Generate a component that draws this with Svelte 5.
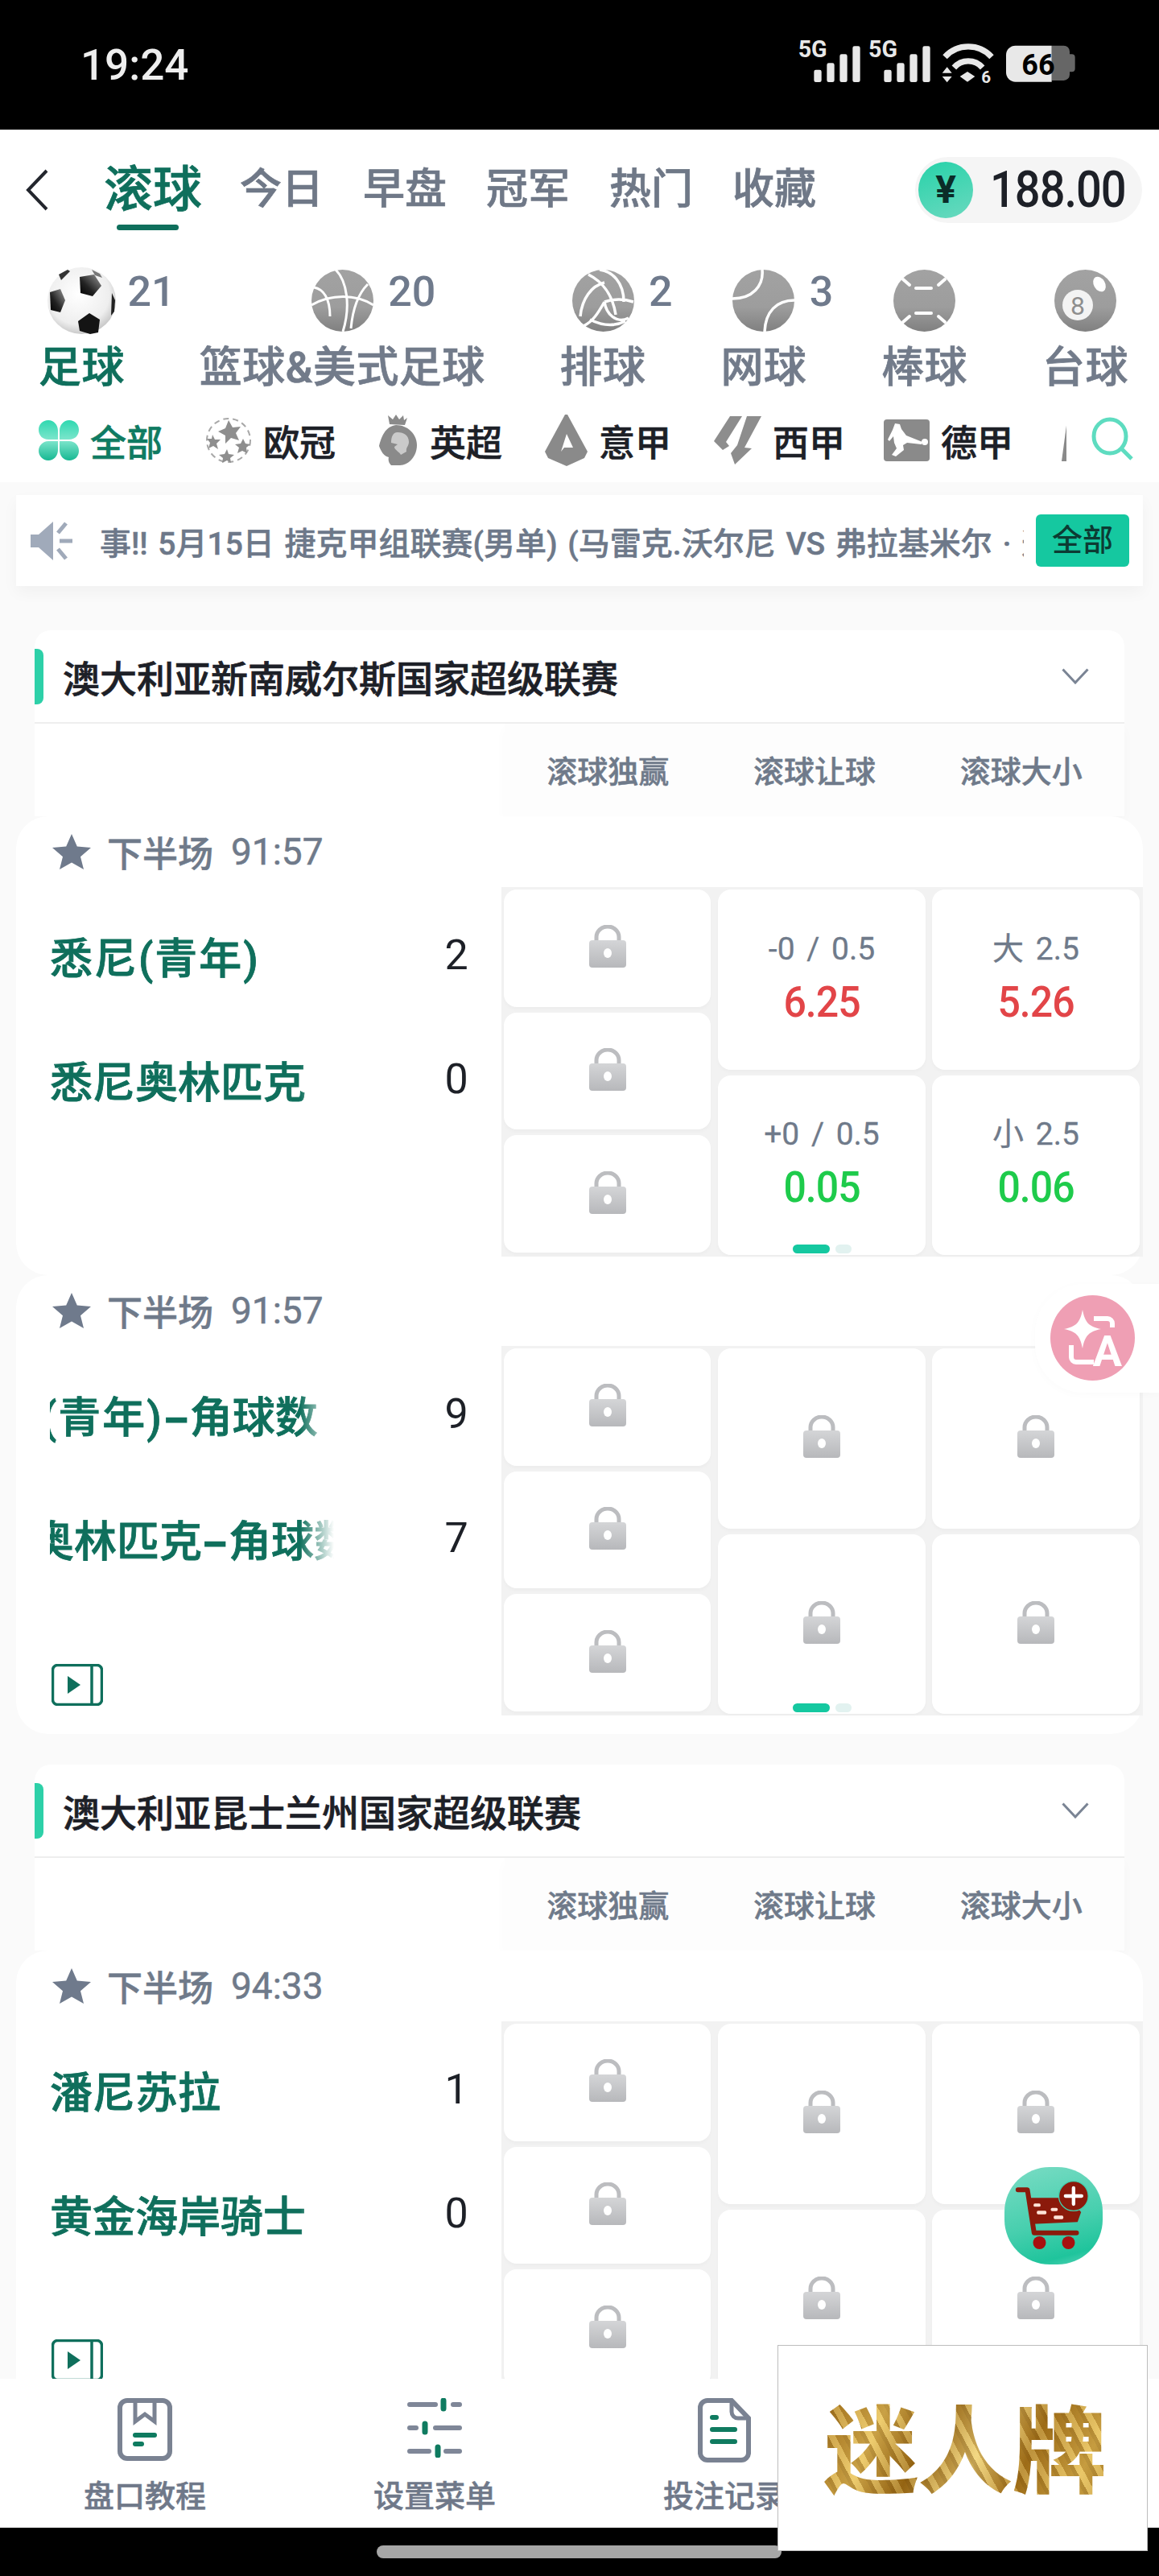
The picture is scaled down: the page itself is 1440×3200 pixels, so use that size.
<script>
  const tabs = ['今日', '早盘', '冠军', '热门', '收藏'];
  const leagueOne = [
    { time: '91:57', teams: [{ n: '悉尼(青年)', s: 2, wide: true }, { n: '悉尼奥林匹克', s: 0 }], video: false,
      cols: [[{ l: '-0 / 0.5', v: '6.25', c: 'up' }, { l: '+0 / 0.5', v: '0.05', c: 'down', dots: true }], [{ l: '大 2.5', v: '5.26', c: 'up' }, { l: '小 2.5', v: '0.06', c: 'down' }]] },
    { time: '91:57', teams: [{ n: '悉尼(青年)', s: 9, off: 'a', corner: true, wide: true }, { n: '悉尼奥林匹克', s: 7, off: 'b', corner: true }], video: true,
      cols: [[{}, { dots: true }], [{}, {}]] }
  ];
  const leagueTwo = [
    { time: '94:33', teams: [{ n: '潘尼苏拉', s: 1 }, { n: '黄金海岸骑士', s: 0 }], video: true,
      cols: [[{}, {}], [{}, {}]] }
  ];
</script>

{#snippet lock()}
  <svg class="lock" viewBox="0 0 46 53">
    <defs><linearGradient id="lk" x1="0" y1="0" x2="0" y2="1"><stop offset="0" stop-color="#d4d5d7"/><stop offset="1" stop-color="#b7b8bb"/></linearGradient></defs>
    <path d="M9 22V15a14 13 0 0 1 28 0v7" fill="none" stroke="#bcbdc0" stroke-width="5"/>
    <rect x="0" y="19" width="46" height="34" rx="4" fill="url(#lk)"/>
    <ellipse cx="23" cy="35" rx="5" ry="6" fill="#fff"/>
  </svg>
{/snippet}

{#snippet match(m)}
  <section class="match">
    <div class="match-head">
      <svg class="star" viewBox="0 0 48 44"><path d="M24 0l6.8 15.6 17.2 1.4-13 11.2L39 44 24 35.6 9 44l4-15.8L0 17l17.2-1.4z" fill="#6f7a8c"/></svg>
      <span>下半场</span><span class="clock">{m.time}</span>
    </div>
    <div class="match-body">
      <div class="teams">
        {#each m.teams as t}
          <div class="team">
            <div class="name"><span class:off-a={t.off === 'a'} class:off-b={t.off === 'b'} class:wide={t.wide}>{t.n}</span>{#if t.corner}<span class="hy">-</span><span>角球数</span>{/if}</div>
            <div class="score">{t.s}</div>
          </div>
        {/each}
        {#if m.video}
          <svg class="video" viewBox="0 0 64 52">
            <rect x="1.5" y="1.5" width="61" height="49" rx="6" fill="#fff" stroke="#0f6f5c" stroke-width="3.5"/>
            <path d="M50 2v48" stroke="#0f6f5c" stroke-width="3.5"/>
            <path d="M20 15l16 11-16 11z" fill="#0f6f5c"/>
          </svg>
        {/if}
      </div>
      <div class="grid">
        <div class="col one">
          <div class="cell">{@render lock()}</div>
          <div class="cell">{@render lock()}</div>
          <div class="cell">{@render lock()}</div>
        </div>
        {#each m.cols as col}
          <div class="col two">
            {#each col as c}
              <div class="cell">
                {#if c.v}
                  <div class="line">{c.l}</div>
                  <div class="val {c.c}">{c.v}</div>
                {:else}
                  {@render lock()}
                {/if}
                {#if c.dots}
                  <div class="dots"><i></i><b></b></div>
                {/if}
              </div>
            {/each}
          </div>
        {/each}
      </div>
    </div>
  </section>
{/snippet}

{#snippet leagueHead(title)}
  <div class="league">
    <div class="league-title">
      <i class="accent"></i>
      <h2>{title}</h2>
      <svg class="chev" viewBox="0 0 34 20"><path d="M1.5 1.5L17 18 32.5 1.5" fill="none" stroke="#7a8494" stroke-width="3"/></svg>
    </div>
    <div class="cols-head">
      <div class="cols-right"><span>滚球独赢</span><span>滚球让球</span><span>滚球大小</span></div>
    </div>
  </div>
{/snippet}

<div class="page">
  <header class="status">
    <div class="time">19:24</div>
    <svg class="sys" viewBox="0 0 1200 270">
      <g fill="#e8e8e8">
        <text x="95" y="122" class="sg">5G</text>
        <rect x="154" y="170" width="28" height="46" rx="7"/><rect x="202" y="145" width="28" height="71" rx="7"/><rect x="250" y="112" width="28" height="104" rx="7"/><rect x="298" y="82" width="28" height="134" rx="7"/>
        <text x="357" y="122" class="sg">5G</text>
        <rect x="415" y="170" width="28" height="46" rx="7"/><rect x="463" y="145" width="28" height="71" rx="7"/><rect x="511" y="112" width="28" height="104" rx="7"/><rect x="559" y="82" width="28" height="134" rx="7"/>
        <path d="M642 122a118 118 0 0 1 174 0" fill="none" stroke="#e8e8e8" stroke-width="22"/>
        <path d="M676 162a70 70 0 0 1 106 0" fill="none" stroke="#e8e8e8" stroke-width="22"/>
        <path d="M698 195l28-18 28 18-28 20z"/>
        <path d="M632 182l18-22 18 22zM632 195l18 22 18-22z"/>
        <text x="778" y="220" class="six">6</text>
        <path d="M1040 80h45a22 22 0 0 1 22 22v10h8a12 12 0 0 1 12 12v42a12 12 0 0 1-12 12h-8v10a22 22 0 0 1-22 22h-45z" fill="#666"/>
        <path d="M1040 80h-135a35 35 0 0 0-35 35v65a35 35 0 0 0 35 35h135z"/>
      </g>
      <text x="928" y="188" class="bat">66</text>
    </svg>
  </header>

  <nav class="tabs">
    <svg class="back" viewBox="0 0 28 52"><path d="M26 2L3 26l23 24" fill="none" stroke="#23262d" stroke-width="4"/></svg>
    <a class="tab active">滚球</a>
    {#each tabs as t}<a class="tab">{t}</a>{/each}
    <div class="balance"><span class="coin">¥</span><span class="amount">188.00</span></div>
  </nav>

  <div class="sports">
    <div class="sport on">
      <div class="icon">
        <svg class="ball soccer" viewBox="0 0 85 83">
          <defs>
            <radialGradient id="sb" cx=".45" cy=".4" r=".65"><stop offset="0" stop-color="#fff"/><stop offset=".7" stop-color="#eee"/><stop offset="1" stop-color="#bdbdbd"/></radialGradient>
            <linearGradient id="sd" x1="1" y1="0" x2="0" y2="1"><stop offset="0" stop-color="#999"/><stop offset=".6" stop-color="#222"/><stop offset="1" stop-color="#000"/></linearGradient>
          </defs>
          <ellipse cx="42.5" cy="41.5" rx="42.5" ry="41.5" fill="url(#sb)"/>
          <path d="M40 12l18-3 9 14-11 13-15-4z" fill="url(#sd)"/>
          <path d="M3 31l13-4 6 14-6 15-12-3z" fill="url(#sd)"/>
          <path d="M38 67l14-10 13 8-2 16-10 2-13-4z" fill="#141414"/>
          <path d="M80 32l4 9-1 14-4 5z" fill="#222"/>
          <path d="M14 9l11-6 3 2-11 11z" fill="#333"/>
          <path d="M55 3l10 5 3 5-9-3z" fill="#777"/>
        </svg>
        <span class="count">21</span>
      </div>
      <div class="label">足球</div>
    </div>
    <div class="sport">
      <div class="icon">
        <svg class="ball" viewBox="0 0 77 77">
          <defs><linearGradient id="gb" x1="0" y1="0" x2="0" y2="1"><stop offset="0" stop-color="#a2a2a2"/><stop offset=".6" stop-color="#9d9d9d"/><stop offset="1" stop-color="#808080"/></linearGradient></defs>
          <circle cx="38.5" cy="38.5" r="38.5" fill="url(#gb)"/>
          <g fill="none" stroke="#fff" stroke-width="3">
            <path d="M30 0c14 14 19 45 9 77"/><path d="M0 44c24-14 55-14 77 0"/><path d="M3 22c12 2 20 14 20 36"/><path d="M70 18c-8 8-18 22-21 55"/>
          </g>
        </svg>
        <span class="count">20</span>
      </div>
      <div class="label">篮球&美式足球</div>
    </div>
    <div class="sport">
      <div class="icon">
        <svg class="ball" viewBox="0 0 77 77">
          <circle cx="38.5" cy="38.5" r="38.5" fill="url(#gb)"/>
          <g fill="none" stroke="#fff" stroke-width="3.5">
            <path d="M20 6c16 8 30 24 34 50"/><path d="M34 0c16 2 30 16 30 40"/><path d="M10 58c2-22 14-38 30-42"/><path d="M40 40c12-4 24-4 36 0"/><path d="M40 40C32 54 26 64 14 70"/><path d="M40 40c2 14 14 28 30 20"/><path d="M22 62c12 6 28 10 44 2"/>
          </g>
        </svg>
        <span class="count">2</span>
      </div>
      <div class="label">排球</div>
    </div>
    <div class="sport">
      <div class="icon">
        <svg class="ball" viewBox="0 0 77 77">
          <circle cx="38.5" cy="38.5" r="38.5" fill="url(#gb)"/>
          <g fill="none" stroke="#fff" stroke-width="3.5">
            <path d="M37 0c2 20-12 36-37 36"/><path d="M77 38c-22 0-36 14-37 39"/>
          </g>
        </svg>
        <span class="count">3</span>
      </div>
      <div class="label">网球</div>
    </div>
    <div class="sport">
      <div class="icon">
        <svg class="ball" viewBox="0 0 77 77">
          <circle cx="38.5" cy="38.5" r="38.5" fill="url(#gb)"/>
          <g fill="none" stroke="#fff" stroke-width="4" stroke-linecap="round">
            <path d="M12 12l8 7"/><path d="M28 23h19"/><path d="M56 19l8-7"/><path d="M12 65l8-7"/><path d="M28 54h19"/><path d="M56 58l8 7"/>
          </g>
        </svg>
      </div>
      <div class="label">棒球</div>
    </div>
    <div class="sport">
      <div class="icon">
        <svg class="ball" viewBox="0 0 77 77">
          <circle cx="38.5" cy="38.5" r="38.5" fill="url(#gb)"/>
          <ellipse cx="56" cy="18" rx="7" ry="10" fill="#fff" transform="rotate(-30 56 18)"/>
          <circle cx="29" cy="44" r="19" fill="#f3f3f3"/>
          <text x="29" y="56" class="eight">8</text>
        </svg>
      </div>
      <div class="label">台球</div>
    </div>
  </div>

  <div class="leagues">
    <div class="lg-scroll">
      <div class="lg on">
        <svg class="clover" viewBox="0 0 50 50">
          <defs><linearGradient id="cl" x1="0" y1="0" x2="0" y2="1"><stop offset="0" stop-color="#2fd8b0"/><stop offset=".5" stop-color="#7fe6cd"/><stop offset="1" stop-color="#17b892"/></linearGradient></defs>
          <path d="M12 0c7 0 12 6 12 13v11H12C5 24 0 19 0 12S5 0 12 0zM38 0c7 0 12 5 12 12s-5 12-12 12H26V13C26 6 31 0 38 0zM12 26h12v11c0 7-5 13-12 13S0 44 0 38s5-12 12-12zM26 26h12c7 0 12 5 12 12s-5 12-12 12-12-6-12-13z" fill="url(#cl)"/>
        </svg>
        <span>全部</span>
      </div>
      <div class="lg">
        <svg class="lg-i w58" viewBox="0 0 58 58">
          <circle cx="29" cy="29" r="27" fill="none" stroke="#a8a8a8" stroke-width="2" stroke-dasharray="7 5"/>
          <g fill="#8e8e8e">
            <path d="M29 4l5 9 10-1-6 8 4 9-10-3-7 7 0-10-9-5 9-4z"/>
            <path d="M9 22l3 6 7 0-5 5 2 7-6-4-6 3 2-7-4-5 6 0z"/>
            <path d="M47 27l3 6 6 1-5 4 1 7-6-3-6 3 2-7-5-4 7-1z"/>
            <path d="M27 40l2 6 7 1-5 4 1 6-5-3-6 3 1-6-5-4 7-1z"/>
          </g>
        </svg>
        <span>欧冠</span>
      </div>
      <div class="lg">
        <svg class="lg-i w50 tall" viewBox="0 0 50 64">
          <path d="M14 12L12 1l6 5 4-6 4 6 5-5 1 6 4-3-3 9z" fill="#8a8a8a"/>
          <path d="M22 13c15 0 26 12 26 25 0 12-8 24-21 25H16c-3-3-4-7-3-10-6-1-10-8-12-14C4 28 8 15 22 13z" fill="#8a8a8a"/>
          <path d="M24 22c8 0 14 4 14 12 0 5-4 7-3 12l-7 4c-2-4-8-6-8-10l4-3-8-2c0-7 2-13 8-13z" fill="#fff" opacity=".55"/>
        </svg>
        <span>英超</span>
      </div>
      <div class="lg">
        <svg class="lg-i w53 tall" viewBox="0 0 53 64">
          <path d="M25 0h3l25 46-4 8-22 10L4 54 0 46z" fill="#8a8a8a"/>
          <path d="M27 24l8 17H24l-4 5 7-22z" fill="#fff"/>
        </svg>
        <span>意甲</span>
      </div>
      <div class="lg">
        <svg class="lg-i w59" viewBox="0 0 59 60">
          <path d="M20 0h15L15 32l4 5-8 5L0 31zM41 0h18L38 39l9 1-21 20-5-14 8-10z" fill="#8d8d8d"/>
        </svg>
        <span>西甲</span>
      </div>
      <div class="lg pull">
        <svg class="lg-i w57" viewBox="0 0 57 52">
          <rect width="57" height="52" rx="4" fill="#8a8a8a"/>
          <path d="M14 5l6 1 2 6 6 8 20 8-1 3-18-2-5 3 1 6-10 8-5-2 6-8-3-7-1-8-5 6-2-2 6-12z" fill="#fff"/>
          <circle cx="51" cy="28" r="4" fill="#fff"/>
        </svg>
        <span>德甲</span>
      </div>
      <svg class="lg-i w57 edge" viewBox="0 0 57 52"><path d="M0 52L7 0v52z" fill="#8a8a8a"/></svg>
    </div>
    <svg class="search" viewBox="0 0 52 54">
      <ellipse cx="23" cy="24" rx="20" ry="21" fill="none" stroke="#5edcc0" stroke-width="5"/>
      <path d="M38 40l12 12" stroke="#5edcc0" stroke-width="5"/>
    </svg>
  </div>

  <main class="content">
    <div class="notice">
      <svg class="speaker" viewBox="0 0 52 48">
        <path d="M0 16h10L28 0v48L10 32H0z" fill="#a0aaba"/>
        <path d="M34 14L44 2M36 24h16M34 34l10 12" stroke="#a0aaba" stroke-width="5"/>
      </svg>
      <div class="notice-text"><span>赛事!! 5月15日 捷克甲组联赛(男单) (马雷克.沃尔尼 VS 弗拉基米尔 · 这</span></div>
      <button class="all">全部</button>
    </div>

    {@render leagueHead('澳大利亚新南威尔斯国家超级联赛')}
    {#each leagueOne as m}{@render match(m)}{/each}
    <div class="spacer"></div>
    {@render leagueHead('澳大利亚昆士兰州国家超级联赛')}
    {#each leagueTwo as m}{@render match(m)}{/each}
  </main>

  <footer class="bottom">
    <div class="bt">
      <svg class="bt-i book" viewBox="0 0 68 78">
        <rect x="3" y="3" width="62" height="72" rx="9" fill="none" stroke="#7a8292" stroke-width="6"/>
        <path d="M22 4v25l12-9 12 9V4" fill="none" stroke="#7a8292" stroke-width="5"/>
        <path d="M22 46h24M22 57h8" stroke="#0f7b60" stroke-width="6" stroke-linecap="round"/>
      </svg>
      <span>盘口教程</span>
    </div>
    <div class="bt">
      <svg class="bt-i sliders" viewBox="0 0 68 74">
        <g stroke-width="6" stroke-linecap="round" stroke="#7f8798">
          <path d="M3 8h32M57 8h8M3 37h8M35 37h30M3 66h24M48 66h17"/>
        </g>
        <path d="M45 3v10M22 32v10M38 61v10" stroke="#0f7b60" stroke-width="7" stroke-linecap="round"/>
      </svg>
      <span>设置菜单</span>
    </div>
    <div class="bt">
      <svg class="bt-i doc" viewBox="0 0 66 80">
        <path d="M12 3h30l21 22v43a9 9 0 0 1-9 9H12a9 9 0 0 1-9-9V12a9 9 0 0 1 9-9z" fill="none" stroke="#7a8292" stroke-width="6"/>
        <path d="M42 3v14a8 8 0 0 0 8 8h13" fill="none" stroke="#7a8292" stroke-width="5"/>
        <path d="M18 24h5M18 39h28M18 54h28" stroke="#0f7b60" stroke-width="6" stroke-linecap="round"/>
      </svg>
      <span>投注记录</span>
    </div>
    <div class="bt"></div>
  </footer>
  <div class="home"><i></i></div>

  <aside class="translate">
    <div class="t-circle">
      <svg viewBox="0 0 105 105">
        <path d="M40 18c3 16 8 21 23 24-15 3-20 8-23 24-3-16-8-21-23-24 15-3 20-8 23-24z" fill="#fff"/>
        <path d="M54 29h17a6 6 0 0 1 6 6v5M26 62v15a6 6 0 0 0 6 6h22" fill="none" stroke="#fff" stroke-width="6"/>
        <text x="71" y="88" class="a">A</text>
      </svg>
    </div>
  </aside>

  <aside class="cart">
    <svg viewBox="0 0 365 363">
      <path d="M50 85H85L110 245H268" fill="none" stroke="#8b1a0b" stroke-width="18" stroke-linecap="round" stroke-linejoin="round"/>
      <path d="M92 115H240L285 168 272 205 104 212z" fill="#8b1a0b"/>
      <rect x="108" y="136" width="26" height="12" rx="5" fill="#ffe3d8"/>
      <rect x="120" y="163" width="36" height="13" rx="5" fill="#ffe3d8"/>
      <rect x="172" y="152" width="26" height="12" rx="5" fill="#ffe3d8"/>
      <rect x="183" y="181" width="36" height="13" rx="5" fill="#ffe3d8"/>
      <circle cx="130" cy="282" r="24" fill="#a81010"/>
      <circle cx="238" cy="282" r="24" fill="#a81010"/>
      <circle cx="257" cy="108" r="55" fill="#8b1a0b" stroke="#42cfac" stroke-width="4"/>
      <path d="M227 108h60M257 78v60" stroke="#fff" stroke-width="13" stroke-linecap="round"/>
    </svg>
  </aside>

  <aside class="ad"><span>迷人牌</span></aside>
</div>

<style>
  :global(body) { margin: 0; background: #000; }
  * { box-sizing: border-box; }
  .page {
    position: relative; width: 1440px; height: 3200px; overflow: hidden;
    display: flex; flex-direction: column; background: #fafafa;
    font-family: Roboto, "Noto Sans CJK SC", sans-serif; color: #6f7a8a;
  }

  .status { flex: none; height: 161px; background: #000; display: flex; justify-content: space-between; padding: 0 80px 0 100px; }
  .time { font-family: Roboto, sans-serif; font-size: 53px; line-height: 54px; font-weight: 500; color: #eee; margin-top: 54px; }
  .sys { width: 400px; height: 90px; margin-top: 30px; }
  .sg { font: 700 86px/1 Roboto, sans-serif; }
  .six { font: 700 62px/1 Roboto, sans-serif; }
  .bat { font: 700 108px/1 Roboto, sans-serif; fill: #000; }

  .tabs { flex: none; height: 138px; background: #fff; display: flex; align-items: center; padding: 12px 21px 0 0; position: relative; }
  .back { width: 28px; height: 52px; margin-left: 32px; margin-right: 69px; }
  .tab { font-size: 52px; line-height: 60px; font-weight: 500; -webkit-text-stroke: .7px currentColor; margin-right: 49px; color: #6f7887; position: relative; }
  .tab.active { font-size: 61px; color: #0f6f5c; margin-right: 47px; }
  .tab.active::after { content: ""; position: absolute; left: 16px; width: 77px; height: 7px; bottom: -20px; border-radius: 4px; background: #0f6f5c; }
  .balance { margin-left: auto; width: 282px; height: 82px; border-radius: 41px; background: #f5f5f5; display: flex; align-items: center; padding-left: 4px; }
  .coin { width: 68px; height: 70px; border-radius: 50%; background: linear-gradient(160deg, #27d2a9, #6ad9bf); color: #0b2c28; font: 700 48px/70px Roboto, sans-serif; text-align: center; }
  .amount { margin-left: 21px; font-size: 56px; font-weight: 500; color: #1d2027; letter-spacing: -1px; transform: scaleY(1.12); }

  .sports { flex: none; background: #fff; height: 197px; display: flex; gap: 93px; padding: 29px 0 0 48px; }
  .sport { display: flex; flex-direction: column; align-items: center; }
  .icon { height: 90px; position: relative; display: flex; justify-content: center; align-items: center; width: 80px; margin-bottom: 11px; }
  .ball { width: 77px; height: 77px; flex: none; }
  .soccer { width: 85px; height: 83px; }
  .count { position: absolute; left: calc(50% + 57px); top: 5px; font-size: 52px; line-height: 60px; font-weight: 500; color: #6f7a8c; }
  .label { font-size: 53px; line-height: 56px; font-weight: 500; -webkit-text-stroke: .7px currentColor; color: #727b8a; white-space: nowrap; letter-spacing: .4px; }
  .sport.on .label { color: #0f6f5c; }
  .eight { font: 400 32px/1 Roboto, sans-serif; fill: #8e8e8e; text-anchor: middle; }

  .leagues { flex: none; background: #fff; height: 103px; display: flex; align-items: flex-start; padding: 17px 32px 0 48px; justify-content: space-between; }
  .lg-scroll { width: 1277px; overflow: hidden; display: flex; gap: 53px; height: 68px; align-items: center; }
  .lg { display: flex; align-items: center; gap: 14px; flex: none; font-size: 45px; font-weight: 500; -webkit-text-stroke: .6px currentColor; color: #1d2027; }
  .lg.on { color: #0f7b62; }
  .lg.pull { margin-left: -5px; }
  .clover { width: 50px; height: 50px; }
  .lg-i { flex: none; height: 60px; }
  .w58 { width: 58px; } .w50 { width: 50px; } .w53 { width: 53px; } .w59 { width: 59px; } .w57 { width: 57px; height: 52px; }
  .tall { height: 66px; }
  .edge { margin-left: 7px; }
  .search { width: 52px; height: 54px; margin-top: 5px; }

  .content { flex: 1; min-height: 0; overflow: hidden; padding-top: 16px; }
  .notice { height: 113px; margin: 0 20px 55px; background: #fff; box-shadow: 0 8px 18px rgba(0,0,0,.04); display: flex; align-items: center; padding: 0 17px 0 18px; }
  .speaker { width: 52px; height: 48px; flex: none; }
  .notice-text { width: 1148px; margin-left: 34px; overflow: hidden; white-space: nowrap; font-size: 39px; word-spacing: 3px; font-weight: 500; -webkit-text-stroke: .5px currentColor; color: #6d7889; flex: none; }
  .notice-text span { display: inline-block; margin-left: -39px; }
  .all { flex: none; margin-left: 15px; width: 116px; height: 65px; border: 0; border-radius: 6px; background: #15c8a0; font: 500 38px/65px Roboto, "Noto Sans CJK SC", sans-serif; color: #0c3b33; padding: 0; }

  .league { margin: 0 43px; background: #fff; border-radius: 20px 20px 0 0; }
  .league-title { height: 116px; border-bottom: 2px solid #eee; display: flex; align-items: center; position: relative; padding: 0 44px 0 35px; }
  .accent { position: absolute; left: 0; top: 23px; width: 11px; height: 69px; border-radius: 0 8px 8px 0; background: #2dd0a8; }
  h2 { margin: 0; font-size: 46px; font-weight: 500; -webkit-text-stroke: .7px currentColor; color: #1d2027; flex: 1; }
  .chev { width: 34px; height: 20px; }
  .cols-head { height: 115px; display: flex; justify-content: flex-end; }
  .cols-right { width: 770px; background: #fdfdfd; display: flex; align-items: center; padding-bottom: 3px; box-shadow: 0 6px 14px rgba(0,0,0,.025); }
  .cols-right span { flex: 1; text-align: center; font-size: 38px; font-weight: 500; -webkit-text-stroke: .5px currentColor; color: #6f7a8a; }

  .match { position: relative; margin: 0 20px; height: 570px; background: #fff; border-radius: 40px; }
  .match-head { height: 88px; display: flex; align-items: center; padding-left: 45px; font-size: 44px; font-weight: 500; -webkit-text-stroke: .5px currentColor; color: #6f7a8a; }
  .star { width: 48px; height: 44px; margin-right: 20px; }
  .clock { margin-left: 22px; font-size: 46px; font-weight: 400; }
  .match-body { display: flex; }
  .teams { width: 603px; padding: 8px 0 0 42px; }
  .team { height: 154px; display: flex; align-items: center; }
  .name { width: 353px; overflow: hidden; white-space: nowrap; font-size: 53px; font-weight: 500; -webkit-text-stroke: .8px currentColor; color: #0f6f5c; -webkit-mask-image: linear-gradient(to right, #000 88%, transparent 100%); mask-image: linear-gradient(to right, #000 88%, transparent 100%); }
  .name span { display: inline-block; }
  .wide { letter-spacing: 2px; }
  .name .hy { margin: 0 6px; transform: scaleX(1.7); font-weight: 700; }
  .off-a { margin-left: -120px; }
  .off-b { margin-left: -129px; }
  .score { margin-left: 137px; width: 30px; text-align: center; font-size: 52px; color: #1d2027; margin-top: -1px; }
  .video { display: block; width: 64px; height: 52px; margin-top: 79px; margin-left: 2px; }

  .grid { width: 797px; height: 459px; background: #f2f2f2; display: flex; gap: 8px; padding: 3px 4px 2px 3px; }
  .col { display: flex; flex-direction: column; gap: 7px; }
  .col.one { width: 257px; padding-bottom: 3px; margin-right: 1px; }
  .col.two { width: 258px; }
  .cell { flex: 1; position: relative; background: #fff; border-radius: 16px; box-shadow: 0 3px 4px rgba(0,0,0,.025); display: flex; flex-direction: column; align-items: center; justify-content: center; }
  .lock { width: 46px; height: 53px; margin-top: -4px; }
  .line { font-size: 39px; line-height: 44px; word-spacing: 5px; color: #6f7a8a; -webkit-text-stroke: .3px currentColor; margin-top: -2px; }
  .val { font-size: 50px; line-height: 60px; font-weight: 500; letter-spacing: -1px; margin-top: 14px; transform: scaleY(1.08); }
  .up { color: #e24548; }
  .down { color: #1ecb4b; }
  .dots { position: absolute; bottom: 2px; left: 93px; display: flex; gap: 7px; }
  .dots i { width: 46px; height: 11px; border-radius: 6px; background: #15c8a0; }
  .dots b { width: 20px; height: 11px; border-radius: 6px; background: #e2f2f0; }

  .spacer { height: 38px; }

  .bottom { flex: none; height: 185px; background: #fff; display: grid; grid-template-columns: repeat(4, 360px); position: relative; }
  .bt { display: flex; flex-direction: column; align-items: center; padding-top: 24px; font-size: 38px; font-weight: 500; -webkit-text-stroke: .5px currentColor; color: #6f7889; }
  .bt span { position: absolute; top: 123px; line-height: 46px; }
  .book { width: 68px; height: 78px; }
  .sliders { width: 68px; height: 74px; }
  .doc { width: 66px; height: 80px; }
  .home { flex: none; height: 60px; background: #000; padding: 22px 0 0 468px; }
  .home i { display: block; width: 503px; height: 16px; border-radius: 8px; background: #a6a6a6; }

  .translate { position: absolute; top: 1595px; right: 0; width: 154px; height: 135px; background: #fff; border-radius: 60px 0 0 60px; padding: 14px 0 0 19px; box-shadow: 0 2px 12px rgba(0,0,0,.02); }
  .t-circle { width: 105px; height: 106px; border-radius: 50%; background: #ef9fb4; }
  .t-circle svg { display: block; width: 105px; height: 105px; }
  .a { font: 700 54px/1 Roboto, sans-serif; fill: #fff; text-anchor: middle; }

  .cart { position: absolute; left: 1248px; top: 2692px; width: 122px; height: 121px; border-radius: 46%; background: linear-gradient(165deg, #7adcc4 0%, #47cfae 55%, #1fc49c 85%, #5fd6bb 100%); }
  .cart svg { display: block; width: 122px; height: 121px; }

  .ad { position: absolute; left: 966px; top: 2913px; width: 460px; height: 256px; background: #fff; border: 1px solid #bdbdbd; padding: 63px 0 0 57px; }
  .ad span { display: block; font-size: 117px; line-height: 140px; font-weight: 900; white-space: nowrap; background: repeating-linear-gradient(62deg, rgba(110,70,10,.35) 0 5px, rgba(255,235,160,.25) 5px 13px, rgba(130,85,15,.3) 13px 21px), linear-gradient(115deg, #a8741a 0%, #e8c25e 18%, #9c6a14 32%, #efd27a 48%, #a9761c 62%, #e3bb55 78%, #8f5f12 100%); -webkit-background-clip: text; background-clip: text; color: transparent; }
</style>
